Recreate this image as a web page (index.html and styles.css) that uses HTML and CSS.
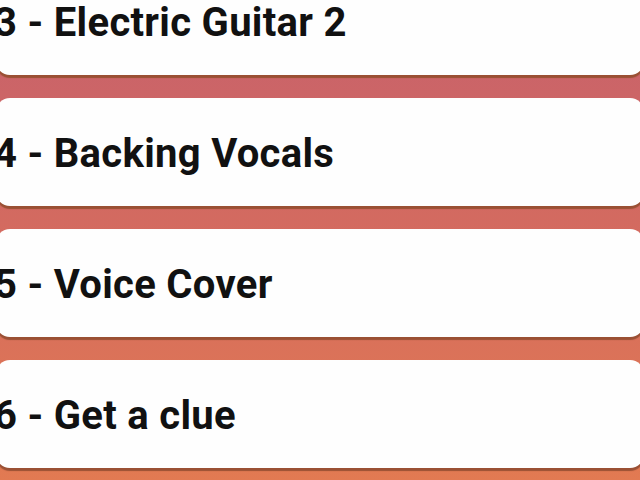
FILE: index.html
```html
<!DOCTYPE html>
<html>
<head>
  <meta charset="utf-8">
  <title>Tracks</title>
  <link rel="stylesheet" href="styles.css">
</head>
<body>
  <div class="track-list">
    <div class="track"><span>3 - Electric Guitar 2</span></div>
    <div class="track"><span>4 - Backing Vocals</span></div>
    <div class="track"><span>5 - Voice Cover</span></div>
    <div class="track"><span>6 - Get a clue</span></div>
  </div>
</body>
</html>
```

FILE: styles.css
```css
html, body {
  height: 100%;
}
body {
  margin: 0;
  overflow: hidden;
  font-family: Roboto, 'Noto Sans', sans-serif;
  background: linear-gradient(180deg, #c7616c 0%, #d46b5f 50%, #e27a52 100%);
}
.track-list {
  display: flex;
  flex-direction: column;
  gap: 23px;
  margin-top: -33px;
  margin-left: -4px;
  margin-right: -4px;
}
.track {
  height: 108px;
  box-sizing: border-box;
  padding-top: 4px;
  display: flex;
  align-items: center;
  background-color: #fefefe;
  border-radius: 14px;
  box-shadow: 0 3px 1px #9a5034;
}
.track span {
  font-size: 40px;
  font-weight: 700;
  line-height: 1;
  letter-spacing: 0.3px;
  color: #111111;
  margin-left: -2px;
  white-space: nowrap;
}
```
